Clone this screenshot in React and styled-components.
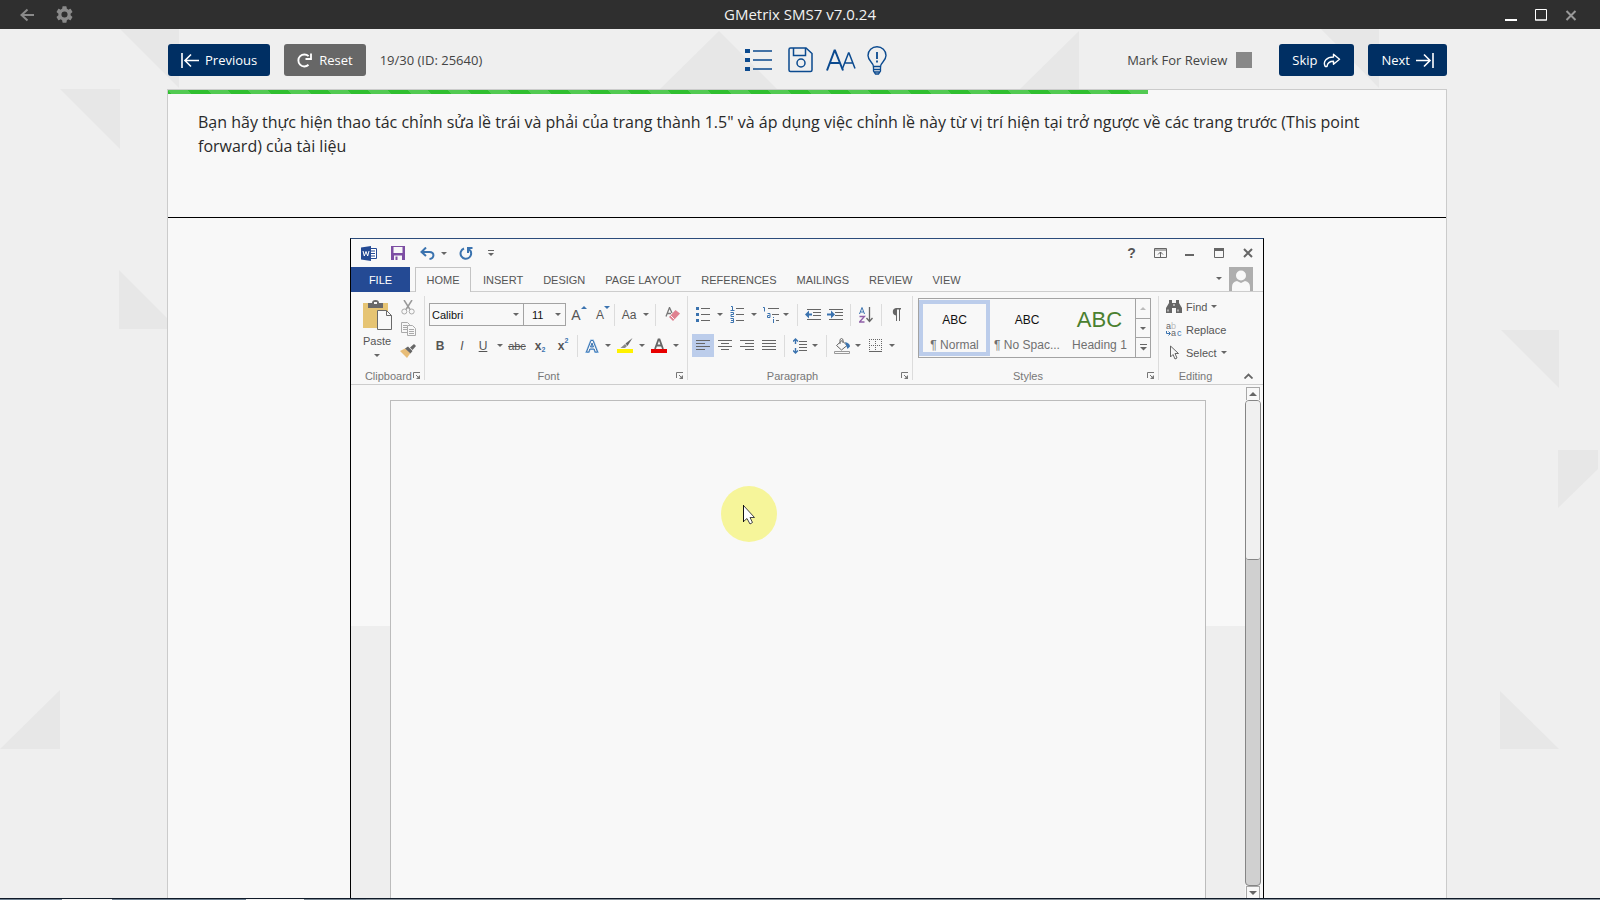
import React from "react";
import styled, { createGlobalStyle } from "styled-components";

const ui = `"Open Sans", "Noto Sans", sans-serif`;
const office = `"Liberation Sans", Arial, sans-serif`;
const navy = "#002f63";
const blue = "#3b73af";
const gray = "#666";

const GlobalStyle = createGlobalStyle`
  *, *::before, *::after { box-sizing: border-box; }
  html, body { margin: 0; padding: 0; }
  body { background: #efefef; font-family: ${ui}; overflow: hidden; }
  button { font: inherit; color: inherit; background: none; border: 0; padding: 0; margin: 0; }
  svg { display: block; flex: none; }
`;

const Shell = styled.div`
  position: relative;
  isolation: isolate;
  display: flex;
  flex-direction: column;
  height: 100vh;
  background: #efefef;
`;

const Backdrop = styled.svg`
  position: absolute;
  inset: 0;
  z-index: -1;
  width: 100%;
  height: 100%;
`;

/* ---------- application title bar ---------- */

const TitleBar = styled.header`
  display: grid;
  grid-template-columns: 1fr auto 1fr;
  align-items: center;
  flex: none;
  height: 29px;
  padding: 0 18px;
  background: #2f2f2f;
  color: #f2f2f2;
`;

const Title = styled.h1`
  margin: 0;
  padding-bottom: 2px;
  font-size: 15px;
  line-height: 20px;
  font-weight: 400;
`;

const TitleActions = styled.div`
  display: flex;
  align-items: center;
  gap: ${(p) => p.$gap}px;
  justify-content: ${(p) => (p.$end ? "flex-end" : "flex-start")};
  padding-right: ${(p) => (p.$end ? 5 : 0)}px;
`;

/* ---------- test toolbar ---------- */

const Main = styled.main`
  display: flex;
  flex-direction: column;
  flex: 1;
  min-height: 0;
  padding: 0 153px 0 167px;
`;

const Toolbar = styled.div`
  display: grid;
  grid-template-columns: 1fr auto 1fr;
  align-items: center;
  flex: none;
  height: 60px;
  padding: 2px 0 0 1px;
  font-size: 13px;
  color: #444;
`;

const ToolbarSide = styled.div`
  display: flex;
  align-items: center;
  gap: 14px;
  justify-content: ${(p) => (p.$end ? "flex-end" : "flex-start")};
`;

const ToolIcons = styled.div`
  display: flex;
  align-items: center;
  gap: 11px;
  padding-left: 16px;
  color: #0b4a8f;
`;

const NavButton = styled.button`
  display: flex;
  align-items: center;
  gap: 6px;
  height: 32px;
  padding: 0 13px;
  border-radius: 3px;
  background: ${(p) => (p.$muted ? "#676767" : navy)};
  color: #fff;
`;

const ReviewLabel = styled.label`
  display: flex;
  align-items: center;
  gap: 9px;
  margin-right: 13px;
`;

const ReviewBox = styled.input`
  appearance: none;
  width: 16px;
  height: 16px;
  margin: 0;
  background: #888;
`;

/* ---------- question panel ---------- */

const Panel = styled.section`
  display: flex;
  flex-direction: column;
  flex: 1;
  min-height: 0;
  border: 1px solid #cbcbcb;
  border-bottom: 0;
  background: #f8f8f8;
`;

const Progress = styled.div`
  flex: none;
  height: 4px;
`;

const ProgressFill = styled.div`
  height: 100%;
  background-color: #2fbf2f;
  background-image: linear-gradient(
    45deg,
    rgba(255, 255, 255, 0.17) 25%, transparent 25%, transparent 50%,
    rgba(255, 255, 255, 0.17) 50%, rgba(255, 255, 255, 0.17) 75%, transparent 75%
  );
  background-size: 40px 40px;
`;

const Question = styled.p`
  flex: none;
  min-height: 124px;
  margin: 0;
  padding: 16px 60px 0 30px;
  border-bottom: 1px solid #000;
  color: #2a2a2a;
  font-size: 16px;
  line-height: 24px;
`;

/* ---------- word window ---------- */

const WordWindow = styled.div`
  display: flex;
  flex-direction: column;
  flex: 1;
  min-height: 0;
  width: 100%;
  max-width: 914px;
  margin: 20px auto 0;
  border: 1px solid #000;
  border-top-color: #2c4c7c;
  border-bottom: 0;
  font-family: ${office};
  font-size: 11px;
  color: #555;
`;

const QuickBar = styled.div`
  display: flex;
  align-items: center;
  flex: none;
  height: 28px;
  padding: 0 1px 0 4px;
`;

const Spacer = styled.div`
  flex: 1;
`;

const Cell = styled.button`
  display: flex;
  align-items: center;
  justify-content: center;
  flex: none;
  width: ${(p) => p.$w || 22}px;
  height: ${(p) => p.$h || 23}px;
  background: ${(p) => (p.$active ? "#bccdeb" : "transparent")};
`;

const TabBar = styled.nav`
  display: flex;
  flex: none;
  height: 25px;
  border-bottom: 1px solid #cdcdcd;
`;

const FileTab = styled.button`
  width: 59px;
  height: 25px;
  background: #244a94;
  color: #fff;
`;

const HomeTab = styled.button`
  height: 25px;
  width: 56px;
  margin: 0 12px 0 5px;
  border: 1px solid #c4c4c4;
  border-bottom: 0;
  background: #f8f8f8;
`;

const TabList = styled.div`
  display: flex;
  gap: 20px;
`;

const Tab = styled.button`
  height: 25px;
`;

const Ribbon = styled.div`
  display: flex;
  flex: none;
  height: 93px;
  border-bottom: 1px solid #cdcdcd;
`;

const GroupDivider = styled.div`
  flex: none;
  width: 1px;
  margin: 4px 0;
  background: #dcdcdc;
`;

const Group = styled.div`
  display: flex;
  flex-direction: column;
  flex: ${(p) => (p.$w ? `0 0 ${p.$w}px` : "1")};
  padding: 0 0 1px;
`;

const GroupBody = styled.div`
  display: flex;
  flex-direction: ${(p) => (p.$row ? "row" : "column")};
  flex: 1;
  gap: ${(p) => p.$gap || 0}px;
  padding: ${(p) => p.$pad || "11px 0 0 4px"};
`;

const GroupFooter = styled.div`
  display: flex;
  align-items: center;
  flex: none;
  height: 14px;
  padding-right: 3px;
  color: #777;
`;

const GroupName = styled.span`
  flex: 1;
  line-height: 14px;
  text-align: ${(p) => (p.$right ? "right" : "center")};
`;

const Launcher = styled.button`
  display: flex;
  justify-content: center;
  width: ${(p) => (p.$wide ? 24 : 8)}px;
  margin-left: ${(p) => (p.$tight ? 1 : 4)}px;
`;

const Row = styled.div`
  display: flex;
  align-items: center;
  height: ${(p) => p.$h}px;
`;

const Rule = styled.span`
  flex: none;
  width: 1px;
  height: 22px;
  margin: 0 ${(p) => p.$r}px 0 ${(p) => p.$l}px;
  background: #dcdcdc;
`;

const Picker = styled.label`
  position: relative;
  flex: none;
  width: ${(p) => p.$w}px;
  height: 23px;
  margin-right: ${(p) => (p.$joined ? -1 : 0)}px;
  svg {
    position: absolute;
    right: 5px;
    top: 10px;
    pointer-events: none;
  }
`;

const PickerSelect = styled.select`
  appearance: none;
  width: 100%;
  height: 100%;
  padding: 0 0 0 ${(p) => p.$pad}px;
  border: 1px solid #a3a3a3;
  border-radius: 0;
  background: #f8f8f8;
  color: #111;
  font: 11px ${office};
`;

const Glyph = styled.span`
  color: #555;
  font-size: ${(p) => p.$size || 12}px;
  line-height: 14px;
  font-weight: ${(p) => (p.$bold ? 700 : 400)};
  font-style: ${(p) => (p.$italic ? "italic" : "normal")};
  text-decoration: ${(p) => p.$line || "none"};
`;

const Script = styled.span`
  align-self: ${(p) => (p.$up ? "flex-start" : "flex-end")};
  margin: 3px 0;
  color: ${blue};
  font-size: 7px;
  line-height: 8px;
  font-weight: 700;
`;

const PasteButton = styled.button`
  display: flex;
  flex-direction: column;
  align-items: center;
  width: 44px;
`;

const PasteText = styled.span`
  margin: 4px 0 6px;
  line-height: 14px;
`;

const SideStack = styled.div`
  display: flex;
  flex-direction: column;
`;

const Gallery = styled.div`
  display: flex;
  flex: none;
  width: 233px;
  height: 60px;
  border: 1px solid #a3a3a3;
`;

const StyleCard = styled.button`
  display: flex;
  flex-direction: column;
  align-items: center;
  justify-content: space-between;
  flex: 1;
  height: 56px;
  margin-top: 1px;
  padding: 5px 0 0;
  border: 4px solid ${(p) => (p.$active ? "#bccdeb" : "transparent")};
  white-space: nowrap;
`;

const Sample = styled.span`
  color: ${(p) => (p.$big ? "#4a8030" : "#111")};
  font-size: ${(p) => (p.$big ? 22 : 12)}px;
  line-height: 22px;
`;

const StyleName = styled.span`
  color: #707070;
  font-size: 12px;
  line-height: 14px;
`;

const GalleryNav = styled.div`
  display: flex;
  flex-direction: column;
  flex: none;
  width: 15px;
  border-left: 1px solid #a3a3a3;
`;

const GalleryStep = styled.button`
  display: flex;
  align-items: center;
  justify-content: center;
  flex: 1;
  & + & { border-top: 1px solid #a3a3a3; }
`;

const EditCommand = styled.button`
  display: flex;
  align-items: center;
  gap: 4px;
  height: 23px;
`;

const Avatar = styled.svg`
  margin-right: 10px;
`;

/* ---------- document ---------- */

const DocumentArea = styled.div`
  display: flex;
  flex: 1;
  min-height: 0;
  padding-left: 39px;
  background: linear-gradient(#f8f8f8 241px, #eee 241px);
`;

const Sheet = styled.div`
  position: relative;
  flex: 1;
  margin: 15px 39px 0 0;
  border: 1px solid #bcbcbc;
  border-bottom: 0;
  background: #f8f8f8;
`;

const Pointer = styled.div`
  position: absolute;
  left: 330px;
  top: 85px;
  width: 56px;
  height: 56px;
  padding: 19px 0 0 22px;
  border-radius: 50%;
  background: #f6f59a;
`;

const ScrollBar = styled.div`
  display: flex;
  flex-direction: column;
  align-items: center;
  flex: none;
  width: 18px;
  padding: 2px 2px 0 0;
  background: #f8f8f8;
`;

const ScrollStep = styled.button`
  display: flex;
  align-items: center;
  justify-content: center;
  flex: none;
  width: 14px;
  height: ${(p) => (p.$last ? 12 : 13)}px;
  border: 1px solid #a8a8a8;
  border-bottom: 0;
`;

const ScrollTrack = styled.div`
  flex: 1;
  width: 16px;
  border: 1px solid #858585;
  border-radius: 4px;
  background: #d0d0d0;
`;

const ScrollThumb = styled.div`
  height: 159px;
  border-bottom: 1px solid #858585;
  border-radius: 3px;
  background: #f0f0f0;
`;

const BottomEdge = styled.footer`
  flex: none;
  height: 2px;
  border-top: 1px solid #101a28;
  background: linear-gradient(90deg, #6e7f90 62px, #f4f4f4 62px, #f4f4f4 112px, #6e7f90 112px, #6e7f90 246px, #f4f4f4 246px, #f4f4f4 304px, #7b8894 304px, #7b8894 366px, #87919a 366px);
`;

/* ---------- drawings ---------- */

const Svg = ({ w, h, children, ...rest }) => (
  <svg width={w} height={h} viewBox={`0 0 ${w} ${h}`} fill="none" aria-hidden="true" {...rest}>{children}</svg>
);

const Caret = ({ color = gray, up }) => (
  <Svg w={6} h={3}><path d={up ? "M0 3h6L3 0z" : "M0 0h6L3 3z"} fill={color} /></Svg>
);

const LauncherIcon = () => (
  <Svg w={8} h={8}><path d="M.5 6V.5H7" stroke="#777" /><path d="M3 3l3 3" stroke="#777" /><path d="M7 3v4H3z" fill="#777" /></Svg>
);

const Lines = ({ rows, color = gray }) => (
  <g stroke={color}>{rows.map(([x1, x2, y]) => <path key={y} d={`M${x1} ${y + 0.5}H${x2}`} />)}</g>
);

const AlignIcon = ({ kind }) => {
  const short = { left: [0, 9], center: [3, 11], right: [5, 14], justify: [0, 14] }[kind];
  return (
    <Svg w={14} h={11}>
      <Lines rows={[[0, 14, 0], [...short, 3], [0, 14, 6], [...short, 9]]} />
    </Svg>
  );
};

const IndentIcon = ({ out }) => (
  <Svg w={16} h={12}>
    <Lines rows={[[2, 16, 0], [8, 16, 3], [8, 16, 6], [2, 16, 10]]} />
    <path d={out ? "M0 5.500l4-4v3h3v2H4v3z" : "M8 5.500l-4-4v3H0v2h4v3z"} fill={blue} />
  </Svg>
);

const ListIcon = () => (
  <Svg w={14} h={15}>
    <path d="M0 0h3v3H0zM0 6h3v3H0zM0 12h3v3H0z" fill={blue} />
    <Lines rows={[[5, 14, 1], [5, 14, 7], [5, 14, 13]]} />
  </Svg>
);

const NumberedIcon = () => (
  <Svg w={14} h={17}>
    <path d="M1 .500h1.500v4M.5 4.500h4M.5 6.500h3v2h-2.500v2h3M.5 12.500h3v4h-3M1 14.500h2" stroke={blue} />
    <Lines rows={[[6, 14, 2], [6, 14, 8], [6, 14, 14]]} />
  </Svg>
);

const MultilevelIcon = () => (
  <Svg w={16} h={16}>
    <path d="M0 .500h1.500v4M4.500 6.500h2.500v4h-2.500v-2h2M10.500 12v4M10.500 10v1" stroke={blue} />
    <Lines rows={[[5, 16, 1], [9, 16, 7], [13, 16, 13]]} />
  </Svg>
);

const Triangles = () => (
  <Backdrop viewBox="0 0 1600 900" preserveAspectRatio="xMidYMin slice" aria-hidden="true">
    <path
      fill="#e7e7e7"
      d="M60 89h60v60zM120 29h59v59zM119 270v59h59zM60 690v59H0zM719 31l58 58H660zM1079 31v58h-59zM1321 29h58v59zM1501 330h58v58zM1558 450h40v19l-40 39zM1500 691v58h59z"
    />
  </Backdrop>
);

export default function App() {
  return (
    <Shell>
      <GlobalStyle />
      <Triangles />

      <TitleBar>
        <TitleActions $gap={20}>
          <button aria-label="Back">
            <Svg w={18} h={14}><path d="M16 7H3.500M9.500 1.500L3.500 7l6 5.500" stroke="#8a8a8a" strokeWidth="2" /></Svg>
          </button>
          <button aria-label="Settings">
            <svg width="17" height="17" viewBox="2 2 20 20" fill="#8a8a8a" aria-hidden="true">
              <path d="M19.140 12.940c.04-.3.060-.61.060-.94s-.02-.64-.07-.94l2.030-1.580a.49.490 0 0 0 .12-.61l-1.920-3.320a.488.488 0 0 0-.59-.22l-2.390.96c-.5-.38-1.030-.7-1.620-.94l-.36-2.540A.484.484 0 0 0 13.920 2.400h-3.840c-.24 0-.43.17-.47.410l-.36 2.540c-.59.240-1.130.570-1.620.94l-2.390-.96c-.22-.08-.47 0-.59.220L2.740 8.870a.48.480 0 0 0 .12.610l2.030 1.580c-.05.300-.09.630-.09.940s.02.640.07.940l-2.030 1.580a.49.490 0 0 0-.12.610l1.920 3.320c.12.220.37.290.59.220l2.390-.96c.5.380 1.030.7 1.620.940l.36 2.540c.05.240.24.410.48.410h3.840c.24 0 .44-.17.470-.41l.36-2.540c.59-.24 1.130-.56 1.620-.94l2.390.96c.22.080.47 0 .59-.22l1.920-3.320a.48.480 0 0 0-.12-.61zM12 15.600a3.600 3.600 0 1 1 0-7.200 3.600 3.600 0 0 1 0 7.200z" />
            </svg>
          </button>
        </TitleActions>
        <Title>GMetrix SMS7 v7.0.24</Title>
        <TitleActions $end $gap={18}>
          <button aria-label="Minimize"><Svg w={12} h={12}><path d="M0 11h12" stroke="#fff" strokeWidth="2" /></Svg></button>
          <button aria-label="Maximize"><Svg w={12} h={12}><path d="M.5.500h11v10.500H.5zM0 11h12" stroke="#fff" /></Svg></button>
          <button aria-label="Close"><Svg w={12} h={12}><path d="M1.500 2l9 9M10.500 2l-9 9" stroke="#999" strokeWidth="2" /></Svg></button>
        </TitleActions>
      </TitleBar>

      <Main>
        <Toolbar>
          <ToolbarSide>
            <NavButton>
              <Svg w={18} h={15}><path d="M1 0v15M18 7.500H4M10 1.500l-6 6 6 6" stroke="#fff" strokeWidth="1.600" /></Svg>
              Previous
            </NavButton>
            <NavButton $muted>
              <Svg w={16} h={15}>
                <path d="M11.500 11.800A6 6 0 1 1 11.600 3.200" stroke="#fff" strokeWidth="1.900" />
                <path d="M14 .500v5.500H8.500" stroke="#fff" strokeWidth="1.800" />
              </Svg>
              Reset
            </NavButton>
            <span>19/30 (ID: 25640)</span>
          </ToolbarSide>

          <ToolIcons>
            <button aria-label="Question list">
              <Svg w={27} h={22}>
                <path d="M0 0h5v4H0zM0 9h5v4H0zM0 18h5v4H0z" fill="currentColor" />
                <path d="M8 2h19M8 11h19M8 20h19" stroke="currentColor" strokeWidth="1.600" />
              </Svg>
            </button>
            <button aria-label="Save">
              <Svg w={32} h={26}>
                <path d="M7.500 1H23l6 5.500V23a1.500 1.500 0 0 1-1.500 1.500h-20A1.500 1.500 0 0 1 6 23V2.500A1.500 1.500 0 0 1 7.500 1z" stroke="currentColor" strokeWidth="1.500" />
                <path d="M10.500 1v7.500h12V1" stroke="currentColor" strokeWidth="1.500" />
                <circle cx="18" cy="16" r="4" stroke="currentColor" strokeWidth="1.500" />
              </Svg>
            </button>
            <button aria-label="Text size">
              <Svg w={30} h={22}>
                <path d="M1 21.500L8.500 1.500h.5l8 20M4 14h9.500" stroke="currentColor" strokeWidth="2" />
                <path d="M16.500 19.500L22.500 4h.5l6 15.500M18.500 14h8.500" stroke="currentColor" strokeWidth="1.500" />
              </Svg>
            </button>
            <button aria-label="Hint">
              <Svg w={20} h={29}>
                <path d="M6.500 20.500c0-4-5.500-5.500-5.500-11a9 8.700 0 0 1 18 0c0 5.500-5.500 7-5.500 11z" stroke="currentColor" strokeWidth="1.400" />
                <path d="M6.500 20.500v4.500l2 3h3l2-3v-4.500M6.500 23.500h7M7 26h6" stroke="currentColor" strokeWidth="1.300" />
                <path d="M10 6v7M10 14.500v2" stroke="currentColor" strokeWidth="1.800" />
              </Svg>
            </button>
          </ToolIcons>

          <ToolbarSide $end>
            <ReviewLabel>
              Mark For Review
              <ReviewBox type="checkbox" />
            </ReviewLabel>
            <NavButton>
              Skip
              <Svg w={18} h={15}>
                <path d="M10.500 1.200l6 5-6 5V8.300C6.500 8.300 4.500 9.500 4 13.500H2.200C-.5 8 4 4 10.500 4z" stroke="#fff" strokeWidth="1.400" strokeLinejoin="round" />
              </Svg>
            </NavButton>
            <NavButton>
              Next
              <Svg w={18} h={15}><path d="M17 0v15M0 7.500h14M8 1.500l6 6-6 6" stroke="#fff" strokeWidth="1.600" /></Svg>
            </NavButton>
          </ToolbarSide>
        </Toolbar>

        <Panel>
          <Progress role="progressbar" aria-label="Progress" aria-valuenow={19} aria-valuemax={30}>
            <ProgressFill style={{ width: "76.7%" }} />
          </Progress>
          <Question>
            Bạn hãy thực hiện thao tác chỉnh sửa lề trái và phải của trang thành 1.5" và áp dụng việc chỉnh lề này từ vị trí hiện tại trở ngược về các trang trước (This point forward) của tài liệu
          </Question>

          <WordWindow>
            <QuickBar>
              <Cell $w={28} aria-label="Word">
                <Svg w={16} h={15}>
                  <path d="M9 2.500h6.500v10H9" fill="#fff" stroke="#244a94" />
                  <path d="M10 5h4M10 7.500h4M10 10h4" stroke="#244a94" />
                  <path d="M0 1.500L10 0v15L0 13.500z" fill="#244a94" />
                  <path d="M2 5l1.300 5L5 5.500 6.700 10 8 5" stroke="#fff" />
                </Svg>
              </Cell>
              <Cell $w={30} aria-label="Save document">
                <Svg w={14} h={14}><path d="M0 0h14v14H0z" fill="#7d4ea3" /><path d="M2.500 1h9v6h-9zM3 9.500h8V14H3z" fill="#f8f8f8" /><path d="M4.500 10.500h2V14h-2z" fill="#7d4ea3" /></Svg>
              </Cell>
              <Cell $w={28} aria-label="Undo">
                <Svg w={15} h={13}><path d="M2 5h7.500c5.500 0 5 6.500 0 7" stroke={blue} strokeWidth="2" /><path d="M6 .500L1.500 5 6 9" stroke={blue} strokeWidth="2" /></Svg>
              </Cell>
              <Cell $w={6} aria-label="Undo history"><Caret /></Cell>
              <Cell $w={38} aria-label="Redo">
                <Svg w={14} h={13}><path d="M5 1.500A5.300 5.300 0 1 0 10 2.200" stroke={blue} strokeWidth="2" /><path d="M13.500 1H9v5" stroke={blue} strokeWidth="2" /></Svg>
              </Cell>
              <Cell $w={12} aria-label="Customize toolbar">
                <Svg w={6} h={7}><path d="M0 .500h6" stroke={gray} /><path d="M0 3h6L3 6z" fill={gray} /></Svg>
              </Cell>
              <Spacer />
              <Cell $w={29} aria-label="Help"><Glyph $bold $size={14}>?</Glyph></Cell>
              <Cell $w={29} aria-label="Ribbon options">
                <Svg w={13} h={10}><path d="M.5.500h12v9H.5zM1 2h11M6.500 9V4M4 6.500L6.500 4 9 6.500" stroke={gray} /></Svg>
              </Cell>
              <Cell $w={29} aria-label="Minimize document"><Svg w={9} h={10}><path d="M0 7h9" stroke={gray} strokeWidth="2" /></Svg></Cell>
              <Cell $w={29} aria-label="Maximize document"><Svg w={10} h={10}><path d="M.5.500h9v9H.5z" stroke={gray} /><path d="M0 1.500h10" stroke={gray} strokeWidth="3" /></Svg></Cell>
              <Cell $w={29} aria-label="Close document"><Svg w={10} h={10}><path d="M1 1l8 8M9 1L1 9" stroke={gray} strokeWidth="2" /></Svg></Cell>
            </QuickBar>

            <TabBar>
              <FileTab>FILE</FileTab>
              <HomeTab>HOME</HomeTab>
              <TabList>
                {["INSERT", "DESIGN", "PAGE LAYOUT", "REFERENCES", "MAILINGS", "REVIEW", "VIEW"].map((t) => <Tab key={t}>{t}</Tab>)}
              </TabList>
              <Spacer />
              <Cell $w={20} aria-label="Account menu"><Caret /></Cell>
              <Avatar width="24" height="24" viewBox="0 0 24 24" aria-hidden="true">
                <path d="M0 0h24v24H0z" fill="#aeaeae" />
                <circle cx="12" cy="8.500" r="5" fill="#f8f8f8" />
                <path d="M3 24v-4q0-5 5-6l4 2 4-2q5 1 5 6v4z" fill="#f8f8f8" />
              </Avatar>
            </TabBar>

            <Ribbon>
              <Group $w={73}>
                <GroupBody $row $pad="4px 0 0 4px">
                  <PasteButton>
                    <Svg w={29} h={34}>
                      <path d="M0 7h25v25H0z" fill="#e6c473" />
                      <path d="M5 7h4q0-3 3.500-3T16 7h4v5H5z" fill="#696969" />
                      <path d="M11 7h3" stroke="#f8f8f8" strokeWidth="2" />
                      <path d="M14.500 14.500h9l5 5v14h-14z" fill="#f8f8f8" stroke="#696969" />
                      <path d="M23.500 14.500v5h5" stroke="#696969" />
                    </Svg>
                    <PasteText>Paste</PasteText>
                    <Caret />
                  </PasteButton>
                  <SideStack>
                    <Cell $w={18} $h={22} aria-label="Cut">
                      <Svg w={14} h={15}>
                        <path d="M3 0l6 9.500M11 0L5 9.500" stroke="#999" strokeWidth="1.500" />
                        <circle cx="3.300" cy="11.500" r="2.500" stroke="#aaa" /><circle cx="10.700" cy="11.500" r="2.500" stroke="#aaa" />
                      </Svg>
                    </Cell>
                    <Cell $w={18} $h={22} aria-label="Copy">
                      <Svg w={15} h={14}>
                        <path d="M.5.500h6l2 2v8h-8zM2 3.500h4M2 5.500h4M2 7.500h4" stroke="#aaa" />
                        <path d="M6.500 3.500h5l3 3v7h-8z" fill="#f8f8f8" stroke="#aaa" /><path d="M8 7.500h5M8 9.500h5M8 11.500h5" stroke="#aaa" />
                      </Svg>
                    </Cell>
                    <Cell $w={18} $h={22} aria-label="Format painter">
                      <Svg w={16} h={14}><path d="M0 7l5-2.500L10.500 9 7 14z" fill="#e8bd78" /><path d="M5 4.500l3-2L12.500 7l-2 2.500zM10 3.500L14 0l2 2-3.500 4z" fill={gray} /></Svg>
                    </Cell>
                  </SideStack>
                </GroupBody>
                <GroupFooter>
                  <GroupName $right>Clipboard</GroupName>
                  <Launcher $tight aria-label="Clipboard settings"><LauncherIcon /></Launcher>
                </GroupFooter>
              </Group>
              <GroupDivider />

              <Group $w={262}>
                <GroupBody $gap={8}>
                  <Row $h={23}>
                    <Picker $w={95} $joined>
                      <PickerSelect aria-label="Font" $pad={2}><option>Calibri</option></PickerSelect>
                      <Caret />
                    </Picker>
                    <Picker $w={43}>
                      <PickerSelect aria-label="Font size" $pad={8}><option>11</option></PickerSelect>
                      <Caret />
                    </Picker>
                    <Cell $w={26} aria-label="Grow font"><Glyph $size={14}>A</Glyph><Script $up><Caret up color={blue} /></Script></Cell>
                    <Cell aria-label="Shrink font"><Glyph>A</Glyph><Script $up><Caret color={blue} /></Script></Cell>
                    <Rule $l={0} $r={1} />
                    <Cell $w={26} aria-label="Change case"><Glyph>Aa</Glyph></Cell>
                    <Cell $w={8} aria-label="Case menu"><Caret /></Cell>
                    <Rule $l={5} $r={2} />
                    <Cell $w={28} aria-label="Clear formatting">
                      <Svg w={15} h={15}>
                        <path d="M1 9.500L4.500.500 7 6M2.500 6.500H6" stroke="#777" strokeWidth="1.300" />
                        <path d="M4 10l6.500-7L15 6.500 8 14z" fill="#e0808f" /><path d="M5.500 8.500l4 4" stroke="#f8f8f8" />
                      </Svg>
                    </Cell>
                  </Row>
                  <Row $h={23}>
                    <Cell aria-label="Bold"><Glyph $bold>B</Glyph></Cell>
                    <Cell aria-label="Italic"><Glyph $italic>I</Glyph></Cell>
                    <Cell $w={20} aria-label="Underline"><Glyph $line="underline">U</Glyph></Cell>
                    <Cell $w={13} aria-label="Underline style"><Caret /></Cell>
                    <Cell $w={22} aria-label="Strikethrough"><Glyph $size={11} $line="line-through">abc</Glyph></Cell>
                    <Cell $w={24} aria-label="Subscript"><Glyph $bold>x</Glyph><Script>2</Script></Cell>
                    <Cell aria-label="Superscript"><Glyph $bold>x</Glyph><Script $up>2</Script></Cell>
                    <Rule $l={3} $r={2} />
                    <Cell $w={24} aria-label="Text effects">
                      <Svg w={14} h={14}>
                        <path d="M1.500 13L6 1.500h2L12.500 13h-2.300l-1-3H4.800l-1 3zM5.500 8h3L7 4z" stroke="#8fbce8" strokeWidth="2" />
                        <path d="M1.500 13L6 1.500h2L12.500 13h-2.300l-1-3H4.800l-1 3zM5.500 8h3L7 4z" fill="#f8f8f8" stroke={blue} />
                      </Svg>
                    </Cell>
                    <Cell $w={8} aria-label="Text effects menu"><Caret /></Cell>
                    <Cell $w={26} aria-label="Highlight">
                      <Svg w={16} h={15}><path d="M0 11h16v4H0z" fill="#fff200" /><path d="M15.500 0l-7 5.500 2 2.500z" fill={gray} /><path d="M8 6L3.500 10H8l2-2z" fill="#8a8a8a" /></Svg>
                    </Cell>
                    <Cell $w={8} aria-label="Highlight color"><Caret /></Cell>
                    <Cell $w={26} aria-label="Font color">
                      <Svg w={16} h={15}><path d="M0 11h16v4H0z" fill="#e80000" /><path d="M4 11L7.500 1.500h1L12 11M5.500 7.500h5" stroke={gray} strokeWidth="1.800" /></Svg>
                    </Cell>
                    <Cell $w={8} aria-label="Font color menu"><Caret /></Cell>
                  </Row>
                </GroupBody>
                <GroupFooter>
                  <GroupName>Font</GroupName>
                  <Launcher aria-label="Font settings"><LauncherIcon /></Launcher>
                </GroupFooter>
              </Group>
              <GroupDivider />

              <Group $w={224}>
                <GroupBody $gap={8}>
                  <Row $h={23}>
                    <Cell aria-label="Bullets"><ListIcon /></Cell>
                    <Cell $w={12} aria-label="Bullet styles"><Caret /></Cell>
                    <Cell aria-label="Numbering"><NumberedIcon /></Cell>
                    <Cell $w={12} aria-label="Number styles"><Caret /></Cell>
                    <Cell aria-label="Multilevel list"><MultilevelIcon /></Cell>
                    <Cell $w={8} aria-label="Multilevel styles"><Caret /></Cell>
                    <Rule $l={7} $r={6} />
                    <Cell $w={18} aria-label="Decrease indent"><IndentIcon out /></Cell>
                    <Cell $w={26} aria-label="Increase indent"><IndentIcon /></Cell>
                    <Rule $l={2} $r={1} />
                    <Cell $w={28} aria-label="Sort">
                      <Svg w={14} h={16}>
                        <path d="M.5 7L3 .500 5.500 7M1.500 5h3" stroke={blue} />
                        <path d="M.5 9.500h5l-5 5.500h5" stroke="#9060a8" strokeWidth="1.300" />
                        <path d="M10.500 0v14M7.500 11l3 3.500 3-3.500" stroke={gray} strokeWidth="1.300" />
                      </Svg>
                    </Cell>
                    <Rule $l={1} $r={0} />
                    <Cell $w={28} aria-label="Show marks">
                      <Svg w={10} h={13}><path d="M10 0v1.500H9V13H8V1.500H6V13H5V7.500a3.800 3.800 0 0 1 0-7.500z" fill={gray} /></Svg>
                    </Cell>
                  </Row>
                  <Row $h={23}>
                    <Cell $active aria-label="Align left"><AlignIcon kind="left" /></Cell>
                    <Cell aria-label="Center"><AlignIcon kind="center" /></Cell>
                    <Cell aria-label="Align right"><AlignIcon kind="right" /></Cell>
                    <Cell aria-label="Justify"><AlignIcon kind="justify" /></Cell>
                    <Rule $l={4} $r={3} />
                    <Cell $w={24} aria-label="Line spacing">
                      <Svg w={14} h={16}><path d="M2.500 1v5M2.500 10v5M0 3.500L2.500 1 5 3.500M0 12.500L2.500 15 5 12.500" stroke={blue} strokeWidth="1.400" /><Lines rows={[[6, 14, 3], [6, 14, 6], [6, 14, 9], [6, 14, 12]]} /></Svg>
                    </Cell>
                    <Cell $w={6} aria-label="Spacing menu"><Caret /></Cell>
                    <Rule $l={8} $r={7} />
                    <Cell $w={16} aria-label="Shading">
                      <Svg w={16} h={16}>
                        <path d="M2.500 7.500L8 2.500l5 5-5.500 4.500z" stroke={gray} /><path d="M6 6V1.500q1.500-2 3 0V5" stroke={gray} />
                        <path d="M11 4q5 1 5 4.500L13.500 11z" fill={blue} /><path d="M.5 13.500h15v2H.5z" stroke="#999" />
                      </Svg>
                    </Cell>
                    <Cell $w={16} aria-label="Shading color"><Caret /></Cell>
                    <Cell $w={18} aria-label="Borders">
                      <Svg w={13} h={13}><path d="M0 .500h13M0 6.500h13M.5 0v13M6.500 0v13M12.500 0v13" stroke={gray} strokeDasharray="1 1" /><path d="M0 12.500h13" stroke={gray} /></Svg>
                    </Cell>
                    <Cell $w={16} aria-label="Border styles"><Caret /></Cell>
                  </Row>
                </GroupBody>
                <GroupFooter>
                  <GroupName>Paragraph</GroupName>
                  <Launcher aria-label="Paragraph settings"><LauncherIcon /></Launcher>
                </GroupFooter>
              </Group>
              <GroupDivider />

              <Group $w={245}>
                <GroupBody $pad="6px 0 0 5px">
                  <Gallery>
                    <StyleCard $active><Sample>ABC</Sample><StyleName>¶ Normal</StyleName></StyleCard>
                    <StyleCard><Sample>ABC</Sample><StyleName>¶ No Spac...</StyleName></StyleCard>
                    <StyleCard><Sample $big>ABC</Sample><StyleName>Heading 1</StyleName></StyleCard>
                    <GalleryNav>
                      <GalleryStep aria-label="Previous styles"><Caret up color="#bbb" /></GalleryStep>
                      <GalleryStep aria-label="Next styles"><Caret /></GalleryStep>
                      <GalleryStep aria-label="All styles"><Svg w={7} h={7}><path d="M0 .500h7" stroke={gray} /><path d="M0 3h7L3.500 6.500z" fill={gray} /></Svg></GalleryStep>
                    </GalleryNav>
                  </Gallery>
                </GroupBody>
                <GroupFooter>
                  <GroupName>Styles</GroupName>
                  <Launcher aria-label="Style settings"><LauncherIcon /></Launcher>
                </GroupFooter>
              </Group>
              <GroupDivider />

              <Group>
                <GroupBody $pad="3px 0 0 7px">
                  <EditCommand>
                    <Svg w={16} h={13}><path d="M3 0h3v3h4V0h3v3l3 5v5h-6V8H6v5H0V8l3-5z" fill={gray} /><path d="M2 9.500v2M12 9.500v2M7 5h2" stroke="#f8f8f8" /></Svg>
                    Find <Caret />
                  </EditCommand>
                  <EditCommand>
                    <Svg w={16} h={15}>
                      <text x="0" y="7" fontSize="9" fill="#666">a</text><text x="5" y="7" fontSize="9" fill="#bbb">b</text>
                      <path d="M.5 9v2.500H4M2.500 9.500l2 2-2 2" stroke={blue} />
                      <text x="5" y="14" fontSize="9" fill="#666">a</text><text x="11" y="14" fontSize="9" fill={blue}>c</text>
                    </Svg>
                    Replace
                  </EditCommand>
                  <EditCommand>
                    <Svg w={16} h={15}><path d="M4.500 1v11l2.500-2.500 2 4.500 2-1-2-4.500h3.500z" fill="#f8f8f8" stroke={gray} /></Svg>
                    Select <Caret />
                  </EditCommand>
                </GroupBody>
                <GroupFooter>
                  <GroupName>Editing</GroupName>
                  <Launcher $wide aria-label="Collapse ribbon"><Svg w={9} h={6}><path d="M.5 5.500l4-4 4 4" stroke={gray} strokeWidth="1.800" /></Svg></Launcher>
                </GroupFooter>
              </Group>
            </Ribbon>

            <DocumentArea>
              <Sheet>
                <Pointer>
                  <Svg w={13} h={20}>
                    <path d="M.5.500v16l3.500-3 3 5.500 2.500-1.500-2.500-5h4.500z" fill="#fff" stroke="#444" />
                    <path d="M.5 0v17" stroke="#111" />
                  </Svg>
                </Pointer>
              </Sheet>
              <ScrollBar>
                <ScrollStep aria-label="Scroll up"><Svg w={8} h={4}><path d="M0 4h8L4 0z" fill={gray} /></Svg></ScrollStep>
                <ScrollTrack><ScrollThumb /></ScrollTrack>
                <ScrollStep $last aria-label="Scroll down"><Svg w={8} h={4}><path d="M0 0h8L4 4z" fill={gray} /></Svg></ScrollStep>
              </ScrollBar>
            </DocumentArea>
          </WordWindow>
        </Panel>
      </Main>
      <BottomEdge />
    </Shell>
  );
}
